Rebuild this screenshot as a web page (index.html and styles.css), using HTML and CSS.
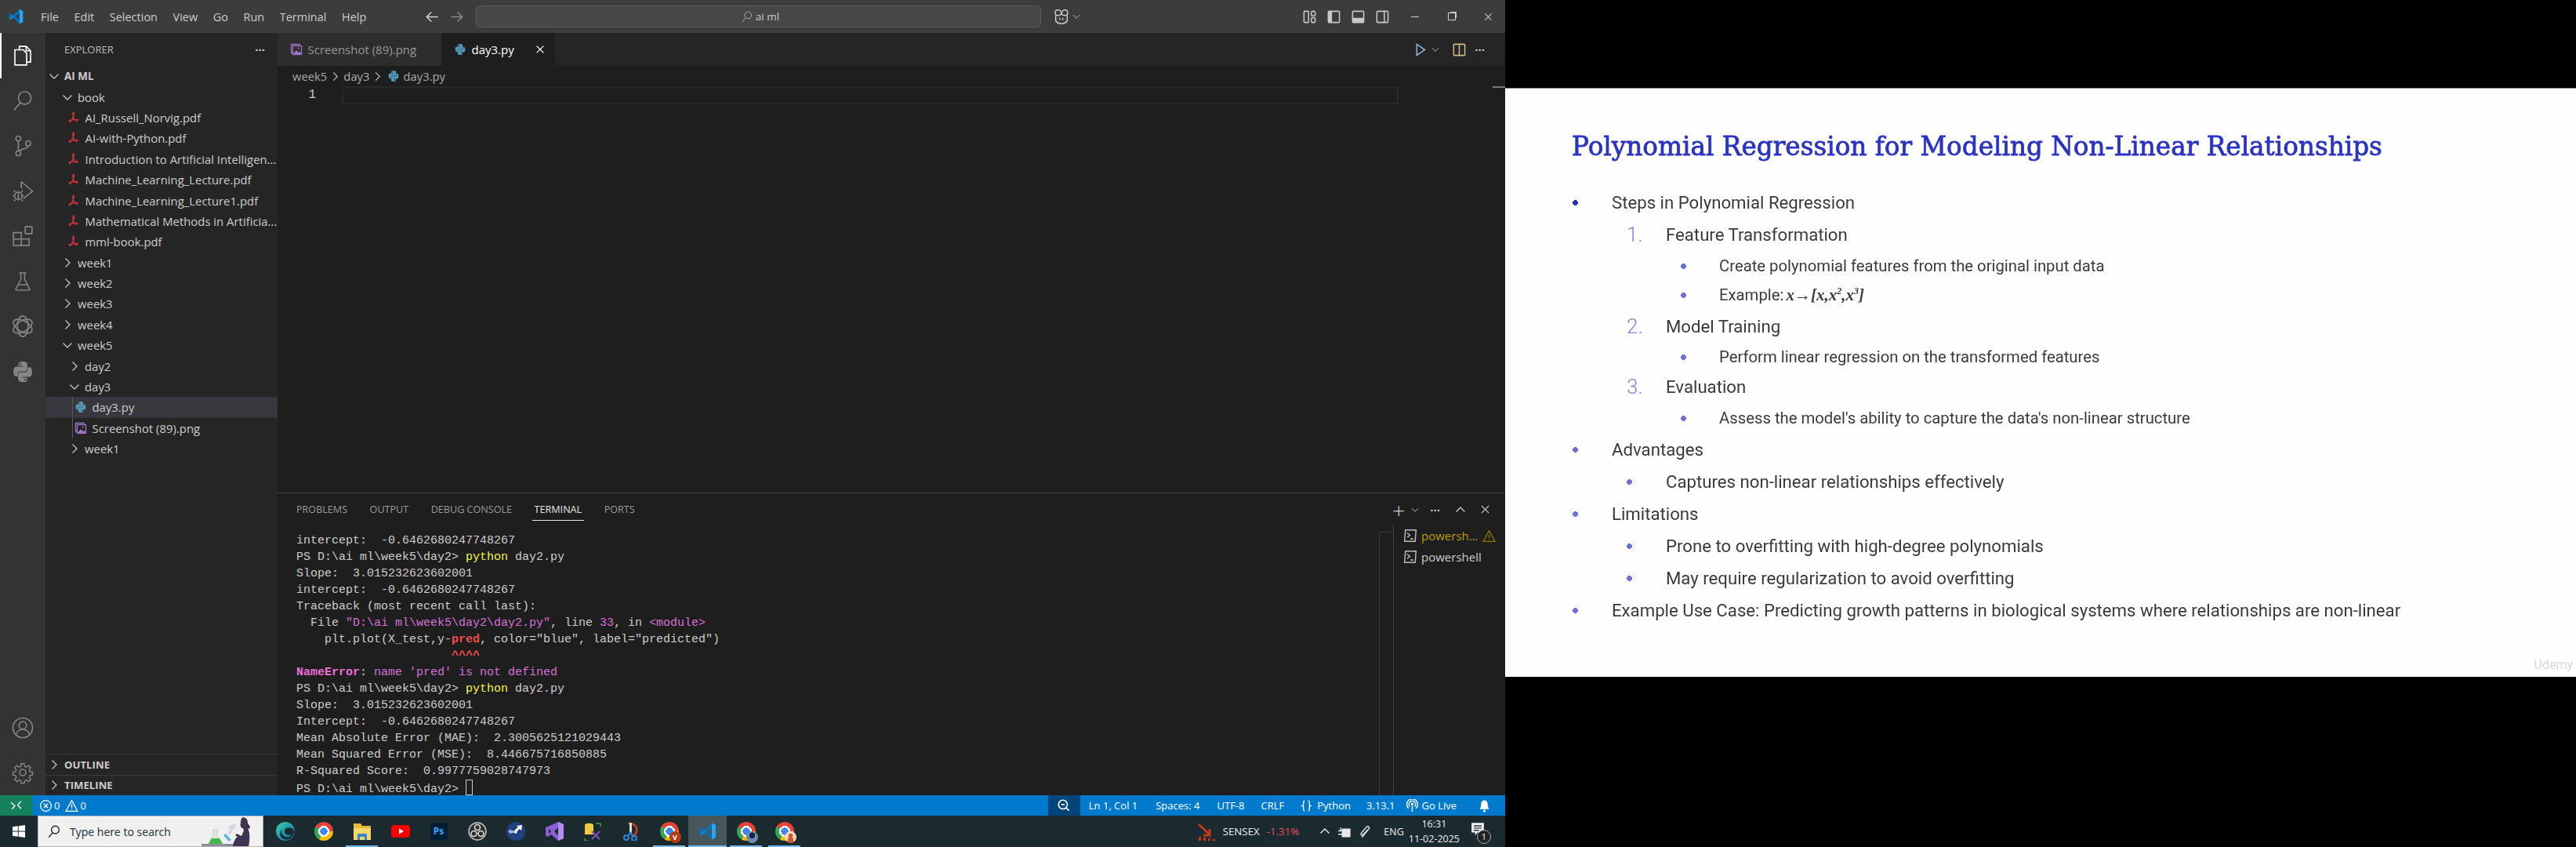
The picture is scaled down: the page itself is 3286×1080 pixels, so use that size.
FILE: index.html
```html
<!DOCTYPE html>
<html lang="en">
<head>
<meta charset="utf-8">
<title>day3.py - AI ML</title>
<link rel="stylesheet" href="styles.css">
</head>
<body>
<svg class="sprite" xmlns="http://www.w3.org/2000/svg">
  <symbol id="vsc" viewBox="0 0 24 24"><path fill="#0b6fb8" d="M17 1.5 7.6 10.3 3.4 7.1 1.7 8v8l1.7.9 4.2-3.2 9.4 8.8 5-2.4V3.9zM17 7.4v9.2L10.9 12z"/><path fill="#2aa5ee" d="M17 1.5l5 2.4v16.2l-5 2.4V16.6l0-9.2z"/><path fill="#1487d4" d="M1.7 16l3-3 3-2.7 2 1.7-6.3 4.9z"/></symbol>
  <symbol id="chev-r" viewBox="0 0 16 16"><path d="M5.5 2.5 11 8l-5.500 5.500"/></symbol>
  <symbol id="chev-d" viewBox="0 0 16 16"><path d="M2.500 5.500 8 11l5.500-5.500"/></symbol>
  <symbol id="files" viewBox="0 0 24 24"><path d="M8.500 6V2.500h7l4.500 4.500v11.500h-4"/><path d="M15.500 2.500V7h4.500"/><path d="M4 6h8.500L16 9.500v12H4z"/></symbol>
  <symbol id="search" viewBox="0 0 24 24"><circle cx="14" cy="9.500" r="6.500"/><path d="M9.500 14.500 3 22"/></symbol>
  <symbol id="scm" viewBox="0 0 24 24"><circle cx="7.500" cy="4.500" r="2.500"/><circle cx="7.500" cy="19.500" r="2.500"/><circle cx="17.500" cy="9.500" r="2.500"/><path d="M7.500 7v10M17.500 12c0 3.500-7 2.500-9 5"/></symbol>
  <symbol id="debug" viewBox="0 0 24 24"><path d="M10.500 2 22 12l-9.500 7.500M10.500 2v7"/><circle cx="7.500" cy="16.500" r="3.800"/><path d="M3.700 16.500H2M13 16.500h-2M4.300 12.500 3 11M10.700 12.500 12 11M4.300 20.500 3 22M10.700 20.500 12 22M7.500 12.700v7.600"/></symbol>
  <symbol id="ext" viewBox="0 0 24 24"><path d="M2.500 8.500h8v13h-8zM2.500 15h16v6.500h-8"/><rect x="14.500" y="2.500" width="7" height="7" rx=".5"/><path d="M10.500 8.500h1M18.500 14v1"/></symbol>
  <symbol id="flask" viewBox="0 0 24 24"><path d="M8 2.500h8M10 2.500v7L4.500 20c-.5 1 0 1.500 1 1.500h13c1 0 1.500-.5 1-1.500L14 9.500v-7M7.500 15.500h9"/></symbol>
  <symbol id="openai" viewBox="0 0 24 24"><ellipse cx="12" cy="12" rx="5.500" ry="10.500"/><ellipse cx="12" cy="12" rx="5.500" ry="10.500" transform="rotate(60 12 12)"/><ellipse cx="12" cy="12" rx="5.500" ry="10.500" transform="rotate(120 12 12)"/></symbol>
  <symbol id="python" viewBox="0 0 24 24"><path class="solid" d="M11.900 1.500c-4.600 0-4.300 2-4.300 2v2.500h4.500v.8H5.500S2.500 6.500 2.500 11.700s2.700 5 2.700 5h1.700v-2.400s-.1-2.700 2.700-2.700h4.500s2.600 0 2.600-2.500V4.400s.4-2.900-4.800-2.900zM9.400 3a.9.9 0 1 1 0 1.800.9.9 0 0 1 0-1.800z"/><path class="solid" transform="rotate(180 12 12)" d="M11.900 1.500c-4.600 0-4.300 2-4.300 2v2.500h4.500v.8H5.500S2.500 6.500 2.500 11.700s2.700 5 2.700 5h1.700v-2.400s-.1-2.700 2.700-2.700h4.500s2.600 0 2.600-2.500V4.400s.4-2.900-4.800-2.900zM9.400 3a.9.9 0 1 1 0 1.800.9.9 0 0 1 0-1.800z"/></symbol>
  <symbol id="account" viewBox="0 0 24 24"><circle cx="12" cy="12" r="10"/><circle cx="12" cy="9.500" r="3.800"/><path d="M5 19c1-3.500 4-5.500 7-5.500s6 2 7 5.500"/></symbol>
  <symbol id="gear" viewBox="0 0 24 24"><circle cx="12" cy="12" r="3.200"/><path d="M10.300 2h3.400l.5 3 2 .9 2.500-1.800 2.400 2.400-1.800 2.500.8 2 3 .5v3.400l-3 .5-.8 2 1.800 2.500-2.400 2.400-2.500-1.800-2 .8-.5 3h-3.400l-.5-3-2-.8-2.500 1.800-2.400-2.400 1.800-2.500-.8-2-3-.5v-3.400l3-.5.8-2-1.800-2.500 2.400-2.400 2.500 1.800 2-.9z" transform="translate(1.200 1.200) scale(.9)"/></symbol>
  <symbol id="pdf" viewBox="0 0 16 16"><path d="M1.500 12.500c3-1.800 6-2.800 12.500-1.700M7.700 1C6.700 1 7 5 7 5c.3 2.500 2 5.500 5.500 8M7.700 1C9 1 8.500 4 7 7.500 5.500 11 4 14 2.500 14"/></symbol>
  <symbol id="png" viewBox="0 0 16 16"><path d="M3 12.500h-1.500V1.500H12V3"/><rect x="3.500" y="3.500" width="11" height="11"/><circle cx="10.800" cy="6.500" r="1.100" class="solid"/><path class="solid" d="M4 14l4-5 3 3 1.500-1.200 2 3.200z"/></symbol>
  <symbol id="close" viewBox="0 0 16 16"><path d="M3 3l10 10M13 3 3 13"/></symbol>
  <symbol id="run" viewBox="0 0 16 16"><path d="M4.500 2 13 8l-8.500 6z"/></symbol>
  <symbol id="split" viewBox="0 0 16 16"><rect x="2" y="2" width="12" height="12" rx="1"/><path d="M8 2v12"/></symbol>
  <symbol id="back" viewBox="0 0 16 16"><path d="M14 8H2.500M7 3 2 8l5 5"/></symbol>
  <symbol id="fwd" viewBox="0 0 16 16"><path d="M2 8h11.500M9 3l5 5-5 5"/></symbol>
  <symbol id="copilot" viewBox="0 0 24 24"><path d="M12 7c-1-3-3.500-4.500-6-4-2.500.5-3 3-2.500 5 .5 2 3 3 5 2.500 2-.4 3.500-1.500 3.500-3.500zM12 7c1-3 3.500-4.500 6-4 2.500.5 3 3 2.500 5-.5 2-3 3-5 2.500-2-.4-3.500-1.500-3.500-3.500z"/><path d="M4 10v8c2 3 5 4 8 4s6-1 8-4v-8"/><path d="M10 14v3M14 14v3"/></symbol>
  <symbol id="lay-custom" viewBox="0 0 16 16"><rect x="2" y="2" width="5" height="12" rx="1"/><rect x="10" y="2" width="4" height="5" rx="1"/><rect x="10" y="9" width="4" height="5" rx="1"/></symbol>
  <symbol id="lay-side" viewBox="0 0 16 16"><rect x="2" y="2" width="12" height="12" rx="1"/><path class="solid" d="M2 3a1 1 0 0 1 1-1h3v12H3a1 1 0 0 1-1-1z"/></symbol>
  <symbol id="lay-panel" viewBox="0 0 16 16"><rect x="2" y="2" width="12" height="12" rx="1"/><path class="solid" d="M2 9h12v4a1 1 0 0 1-1 1H3a1 1 0 0 1-1-1z"/></symbol>
  <symbol id="lay-right" viewBox="0 0 16 16"><rect x="2" y="2" width="12" height="12" rx="1"/><path d="M10 2v12"/></symbol>
  <symbol id="terminal" viewBox="0 0 16 16"><path d="M2.500 1.500h12l-1 13h-12z"/><path d="M4.500 5l3 2.500-3 2.500M8 11.500h3.500"/></symbol>
  <symbol id="warn" viewBox="0 0 16 16"><path d="M8 1.500 15 14.500H1zM8 6v4.500M8 11.700v1"/></symbol>
  <symbol id="remote" viewBox="0 0 16 16"><path d="M2 4l4.500 4L3 12M14 2.500 10 7l4 4.500"/></symbol>
  <symbol id="err" viewBox="0 0 16 16"><circle cx="8" cy="8" r="6.500"/><path d="M5.500 5.500l5 5M10.500 5.500l-5 5"/></symbol>
  <symbol id="zoomout" viewBox="0 0 16 16"><circle cx="7" cy="7" r="5"/><path d="M10.500 10.500 14 14M5 7h4"/></symbol>
  <symbol id="braces" viewBox="0 0 16 16"><path d="M6 2C4 2 4.500 4 4.500 6 4.500 7.500 3 8 3 8s1.500.5 1.500 2c0 2-.5 4 1.500 4M10 2c2 0 1.500 2 1.500 4 0 1.500 1.500 2 1.500 2s-1.500.5-1.500 2c0 2 .5 4-1.500 4"/></symbol>
  <symbol id="golive" viewBox="0 0 16 16"><circle cx="8" cy="6" r="1.600" class="solid"/><path d="M8 8v7M5 9a4 4 0 1 1 6 0M3.500 11a6.500 6.500 0 1 1 9 0"/></symbol>
  <symbol id="bell" viewBox="0 0 16 16"><path class="solid" d="M8 1.500c-3 0-4 2.500-4 5 0 3-1.500 4.500-1.500 5.500h11c0-1-1.500-2.500-1.500-5.500 0-2.500-1-5-4-5z"/><circle cx="8" cy="14" r="1.500" class="solid"/></symbol>
  <symbol id="win" viewBox="0 0 16 16"><path class="solid" d="M0 2.300 6.800 1.300v6.200H0zM7.700 1.200 16 0v7.500H7.700zM0 8.400h6.800v6.300L0 13.700zM7.700 8.400H16V16l-8.300-1.200z"/></symbol>
</svg>

<div class="screen">
  <div class="vscode">
    <header class="titlebar">
      <svg class="tb-logo"><use href="#vsc"/></svg>
      <nav class="menu">
        <span>File</span><span>Edit</span><span>Selection</span><span>View</span><span>Go</span><span>Run</span><span>Terminal</span><span>Help</span>
      </nav>
      <svg class="ico nav-back"><use href="#back"/></svg>
      <svg class="ico nav-fwd"><use href="#fwd"/></svg>
      <div class="cmd"><svg class="ico-s"><use href="#search"/></svg><span>ai ml</span></div>
      <svg class="copilot"><use href="#copilot"/></svg>
      <svg class="ico-xs chev-after"><use href="#chev-d"/></svg>
      <div class="layout-btns">
        <svg class="ico"><use href="#lay-custom"/></svg>
        <svg class="ico"><use href="#lay-side"/></svg>
        <svg class="ico"><use href="#lay-panel"/></svg>
        <svg class="ico"><use href="#lay-right"/></svg>
      </div>
      <div class="win-btns">
        <span class="min"></span>
        <span class="restore"></span>
        <svg class="ico-x"><use href="#close"/></svg>
      </div>
    </header>

    <div class="workbench">
      <aside class="activity">
        <div class="act act-on"><svg><use href="#files"/></svg></div>
        <div class="act"><svg><use href="#search"/></svg></div>
        <div class="act"><svg><use href="#scm"/></svg></div>
        <div class="act"><svg><use href="#debug"/></svg></div>
        <div class="act"><svg><use href="#ext"/></svg></div>
        <div class="act act-flask"><svg><use href="#flask"/></svg></div>
        <div class="act"><svg><use href="#openai"/></svg></div>
        <div class="act"><svg class="gray-fill"><use href="#python"/></svg></div>
        <div class="act act-account"><svg><use href="#account"/></svg></div>
        <div class="act"><svg><use href="#gear"/></svg></div>
      </aside>

      <aside class="sidebar">
        <div class="side-head"><span>EXPLORER</span><b class="dots">···</b></div>
        <div class="tree">
          <div class="row d0 strong"><svg class="chev"><use href="#chev-d"/></svg><span>AI ML</span></div>
          <div class="row d1"><svg class="chev"><use href="#chev-d"/></svg><span>book</span></div>
          <div class="row f1"><svg class="ficon pdf"><use href="#pdf"/></svg><span>AI_Russell_Norvig.pdf</span></div>
          <div class="row f1"><svg class="ficon pdf"><use href="#pdf"/></svg><span>AI-with-Python.pdf</span></div>
          <div class="row f1"><svg class="ficon pdf"><use href="#pdf"/></svg><span>Introduction to Artificial Intelligen...</span></div>
          <div class="row f1"><svg class="ficon pdf"><use href="#pdf"/></svg><span>Machine_Learning_Lecture.pdf</span></div>
          <div class="row f1"><svg class="ficon pdf"><use href="#pdf"/></svg><span>Machine_Learning_Lecture1.pdf</span></div>
          <div class="row f1"><svg class="ficon pdf"><use href="#pdf"/></svg><span>Mathematical Methods in Artificia...</span></div>
          <div class="row f1"><svg class="ficon pdf"><use href="#pdf"/></svg><span>mml-book.pdf</span></div>
          <div class="row d1"><svg class="chev"><use href="#chev-r"/></svg><span>week1</span></div>
          <div class="row d1"><svg class="chev"><use href="#chev-r"/></svg><span>week2</span></div>
          <div class="row d1"><svg class="chev"><use href="#chev-r"/></svg><span>week3</span></div>
          <div class="row d1"><svg class="chev"><use href="#chev-r"/></svg><span>week4</span></div>
          <div class="row d1"><svg class="chev"><use href="#chev-d"/></svg><span>week5</span></div>
          <div class="row d2"><svg class="chev"><use href="#chev-r"/></svg><span>day2</span></div>
          <div class="row d2"><svg class="chev"><use href="#chev-d"/></svg><span>day3</span></div>
          <div class="row f2 guide selected"><svg class="ficon py"><use href="#python"/></svg><span>day3.py</span></div>
          <div class="row f2 guide"><svg class="ficon img"><use href="#png"/></svg><span>Screenshot (89).png</span></div>
          <div class="row d2"><svg class="chev"><use href="#chev-r"/></svg><span>week1</span></div>
        </div>
        <div class="section"><svg class="chev"><use href="#chev-r"/></svg><span>OUTLINE</span></div>
        <div class="section"><svg class="chev"><use href="#chev-r"/></svg><span>TIMELINE</span></div>
      </aside>

      <main class="main">
        <div class="tabs">
          <div class="tab tab-idle"><svg class="ficon img"><use href="#png"/></svg><span>Screenshot (89).png</span></div>
          <div class="tab tab-active"><svg class="ficon py"><use href="#python"/></svg><span>day3.py</span><svg class="tab-x"><use href="#close"/></svg></div>
          <div class="tab-actions">
            <svg class="ico run"><use href="#run"/></svg>
            <svg class="ico-xs"><use href="#chev-d"/></svg>
            <svg class="ico split"><use href="#split"/></svg>
            <b class="dots">···</b>
          </div>
        </div>
        <div class="crumbs">
          <span>week5</span><svg class="ico-xs2"><use href="#chev-r"/></svg>
          <span>day3</span><svg class="ico-xs2"><use href="#chev-r"/></svg>
          <svg class="ficon py crumb-py"><use href="#python"/></svg><span>day3.py</span>
        </div>
        <div class="editor">
          <div class="line">
            <span class="ln">1</span>
            <div class="curline"></div>
            <span class="scrollmark"></span>
          </div>
        </div>

        <section class="panel">
          <div class="panel-head">
            <div class="ptabs">
              <span>PROBLEMS</span><span>OUTPUT</span><span>DEBUG CONSOLE</span><span class="ptab-on">TERMINAL</span><span>PORTS</span>
            </div>
            <div class="pactions">
              <span class="plus">+</span>
              <svg class="ico-xs"><use href="#chev-d"/></svg>
              <b class="dots">···</b>
              <svg class="ico-up"><use href="#chev-d"/></svg>
              <svg class="ico-x2"><use href="#close"/></svg>
            </div>
          </div>
          <div class="panel-body">
            <div class="term">
              <div>intercept:  -0.6462680247748267</div>
              <div>PS D:\ai ml\week5\day2&gt; <span class="yel">python</span> day2.py</div>
              <div>Slope:  3.015232623602001</div>
              <div>intercept:  -0.6462680247748267</div>
              <div>Traceback (most recent call last):</div>
              <div>  File <span class="mag">"D:\ai ml\week5\day2\day2.py"</span>, line <span class="mag">33</span>, in <span class="mag">&lt;module&gt;</span></div>
              <div>    plt.plot(X_test,y-<span class="redb">pred</span>, color="blue", label="predicted")</div>
              <div>                      <span class="redb">^^^^</span></div>
              <div><span class="magb">NameError</span>: <span class="mag">name 'pred' is not defined</span></div>
              <div>PS D:\ai ml\week5\day2&gt; <span class="yel">python</span> day2.py</div>
              <div>Slope:  3.015232623602001</div>
              <div>Intercept:  -0.6462680247748267</div>
              <div>Mean Absolute Error (MAE):  2.3005625121029443</div>
              <div>Mean Squared Error (MSE):  8.446675716850885</div>
              <div>R-Squared Score:  0.9977759028747973</div>
              <div>PS D:\ai ml\week5\day2&gt; <span class="cursor"></span></div>
            </div>
            <div class="term-gutter"></div>
            <div class="term-list">
              <div class="term-item warn-item"><svg class="tico"><use href="#terminal"/></svg><span>powersh...</span><svg class="twarn"><use href="#warn"/></svg></div>
              <div class="term-item"><svg class="tico"><use href="#terminal"/></svg><span>powershell</span></div>
            </div>
          </div>
        </section>
      </main>
    </div>

    <footer class="statusbar">
      <div class="st-remote"><svg><use href="#remote"/></svg></div>
      <div class="st-errs"><svg><use href="#err"/></svg><span>0</span><svg><use href="#warn"/></svg><span>0</span></div>
      <div class="st-right">
        <div class="st-zoom"><svg><use href="#zoomout"/></svg></div>
        <span class="st-ln">Ln 1, Col 1</span>
        <span class="st-sp">Spaces: 4</span>
        <span class="st-utf">UTF-8</span>
        <span>CRLF</span>
        <span class="st-lang"><svg><use href="#braces"/></svg>Python</span>
        <span>3.13.1</span>
        <span class="st-live"><svg><use href="#golive"/></svg>Go Live</span>
        <svg class="st-bell"><use href="#bell"/></svg>
      </div>
    </footer>

    <div class="taskbar">
      <div class="start"><svg><use href="#win"/></svg></div>
      <div class="tsearch">
        <svg class="tsearch-ico"><use href="#search"/></svg>
        <span>Type here to search</span>
        <svg class="tsearch-art" viewBox="0 0 74 40">
          <path fill="#8d8a9c" d="M0 36h50v4H0z"/>
          <path fill="#dfe9dd" stroke="#9fb5a5" d="M15 18h5v7l7 11H9l6-11z"/>
          <path fill="#43b649" d="M13 29h10l4 7H9z"/>
          <path fill="#58b7e8" d="M28 25l3-2 7 8-3 2z"/>
          <path fill="#d7d4e2" d="M34 14l8-4 3 3-6 6-2 5-3-1 2-5z"/>
          <path fill="#3e3553" d="M52 2c5 0 7 3 7 7 0 2 3 3 3 6 0 2-3 2-3 1 3 5 3 15 1 24H40c1-6 2-10 6-13l-3-2 2-2 6 3 3-7-1-3c-3 0-4-3-3-7 0-4 1-7 4-7z"/>
        </svg>
      </div>
      <div class="apps">
        <div class="app"><svg viewBox="0 0 24 24"><defs><linearGradient id="edge" x1="0" y1="0" x2="1" y2="1"><stop offset="0" stop-color="#39d2a0"/><stop offset="1" stop-color="#0c63b8"/></linearGradient></defs><circle cx="12" cy="12" r="12" fill="url(#edge)"/><path fill="#1a2a2e" d="M24 12c-2-4-7-6-11-4-3 2-3 6 0 8 2 1 5 1 7 0-2 3-5 4-7 3-5-1-7-6-5-10-3 3-3 7-2 10 5 6 15 5 18-7z"/></svg></div>
        <div class="app"><span class="chrome"></span></div>
        <div class="app running"><svg viewBox="0 0 24 24"><path fill="#e9ba3c" d="M1 2h9l2 3h11v18H1z"/><path fill="#f6d76b" d="M1 8h22v15H1z"/><path fill="#3a86c8" d="M6 15h12v8h-3v-4H9v4H6z"/></svg></div>
        <div class="app"><svg viewBox="0 0 24 24"><rect y="4" width="24" height="16" rx="4" fill="#f00"/><path fill="#fff" d="M10 8.500 16 12l-6 3.500z"/></svg></div>
        <div class="app"><span class="ps">Ps</span></div>
        <div class="app"><svg viewBox="0 0 24 24"><circle cx="12" cy="12" r="11" fill="#302e31" stroke="#c9c9c9" stroke-width="1.400"/><circle cx="12" cy="7" r="3.500" fill="none" stroke="#ddd" stroke-width="1.600"/><circle cx="7.500" cy="15" r="3.500" fill="none" stroke="#ddd" stroke-width="1.600"/><circle cx="16.500" cy="15" r="3.500" fill="none" stroke="#ddd" stroke-width="1.600"/></svg></div>
        <div class="app"><svg viewBox="0 0 24 24"><circle cx="12" cy="12" r="12" fill="#21407f"/><path fill="#fff" d="M9 14c1-4 4-6 6-7l-2-2 7-1-1 7-2-2c-2 1-4 3-4 6z"/><path fill="#9bb7dc" d="M2 12l4-3v2h5v3H6v2z"/></svg></div>
        <div class="app"><svg viewBox="0 0 24 24"><path fill="#8a5fd0" d="M1 7l5-2 11-5 7 3v18l-7 3-9-8-4 3-3-1.500zM5 9v6l3-3zM17 7l-5 5 5 5z"/><path fill="#b48bf0" d="M17 0l7 3v18l-7 3z"/></svg></div>
        <div class="app"><svg viewBox="0 0 24 24"><path fill="none" stroke="#3f9b46" stroke-width="1.500" d="M2 21v3h4M22 6V2h-6"/><path fill="#f0c93d" d="M2 4c0-3 11-3 11 0v12H2z"/><path fill="none" stroke="#7a58b8" stroke-width="2" d="M11 22l10-10M11 12l10 10"/></svg></div>
        <div class="app"><svg viewBox="0 0 24 24"><path fill="none" stroke="#c8431d" stroke-width="2.500" d="M8 2c6-1 13 3 11 11-1 3-3 4-5 5"/><path fill="#ddd" d="M10 1h3v13h-3z"/><circle cx="6" cy="20" r="3" fill="none" stroke="#2d87d6" stroke-width="2"/><circle cx="16" cy="21" r="3" fill="none" stroke="#2d87d6" stroke-width="2"/><path stroke="#2d87d6" stroke-width="2" d="M8 18l4-5M14 18l-3-5"/></svg></div>
        <div class="app running"><span class="chrome"><em class="badge badge-v">V</em></span></div>
        <div class="app active"><svg><use href="#vsc"/></svg></div>
        <div class="app running"><span class="chrome"><em class="badge badge-photo"></em></span></div>
        <div class="app running"><span class="chrome"><em class="badge badge-user"></em></span></div>
      </div>
      <div class="tray">
        <svg class="sensex" viewBox="0 0 24 24"><path fill="none" stroke="#c8361a" stroke-width="3" d="M2 3l14 13M16 9v8H8"/><path fill="#c8361a" d="M2 19h3v5H2zM8 20h3v4H8zM14 21h3v3h-3zM20 22h3v2h-3z"/></svg>
        <span class="sx-name">SENSEX</span>
        <span class="sx-val">-1.31%</span>
        <svg class="tray-up"><use href="#chev-d"/></svg>
        <svg class="tray-ico" viewBox="0 0 16 16"><path fill="#e8e8e8" d="M6 5h9v9H6z"/><path fill="none" stroke="#e8e8e8" d="M1 7h5M1 11h5M4 3v4"/></svg>
        <svg class="tray-ico" viewBox="0 0 16 16"><path fill="none" stroke="#e8e8e8" d="M3 15l9-11a2 2 0 0 0-3-2L3 9c-2 2-1 4 1 3l7-7"/></svg>
        <span class="eng">ENG</span>
        <div class="clock"><span>16:31</span><span>11-02-2025</span></div>
        <div class="notif"><svg viewBox="0 0 16 16"><path fill="#f0f0f0" d="M1 1h14v11H8l-3 3v-3H1z"/><path stroke="#333" d="M3.500 4.500h9M3.500 7h9M3.500 9.500h6"/></svg><em>1</em></div>
      </div>
    </div>
  </div>

  <div class="viewer">
    <section class="slide">
      <h1>Polynomial Regression for Modeling Non-Linear Relationships</h1>
      <ul class="points">
        <li class="l1"><i class="dot dot-strong"></i>Steps in Polynomial Regression</li>
        <li class="l2 m1"><i class="num">1.</i>Feature Transformation</li>
        <li class="l3"><i class="dot"></i>Create polynomial features from the original input data</li>
        <li class="l3 n3"><i class="dot"></i>Example:<span class="math">x→[x,x<sup>2</sup>,x<sup>3</sup>]</span></li>
        <li class="l2"><i class="num">2.</i>Model Training</li>
        <li class="l3 n1"><i class="dot"></i>Perform linear regression on the transformed features</li>
        <li class="l2 n2"><i class="num">3.</i>Evaluation</li>
        <li class="l3"><i class="dot"></i>Assess the model's ability to capture the data's non-linear structure</li>
        <li class="l1"><i class="dot"></i>Advantages</li>
        <li class="l2 m1"><i class="dot"></i>Captures non-linear relationships effectively</li>
        <li class="l1 m1"><i class="dot"></i>Limitations</li>
        <li class="l2 m1"><i class="dot"></i>Prone to overfitting with high-degree polynomials</li>
        <li class="l2 m1"><i class="dot"></i>May require regularization to avoid overfitting</li>
        <li class="l1 m1"><i class="dot"></i>Example Use Case: Predicting growth patterns in biological systems where relationships are non-linear</li>
      </ul>
      <span class="watermark">Udemy</span>
    </section>
  </div>
</div>
</body>
</html>
```

FILE: styles.css
```css
* { box-sizing: border-box; }
html, body { margin: 0; padding: 0; background: #000; overflow: hidden; }
body { font-family: "Open Sans", "Noto Sans", sans-serif; color: #ccc; }
.sprite { display: none; }
svg { fill: none; stroke: currentColor; stroke-width: 1.3; flex: none; display: block; }
svg .solid, .solid { fill: currentColor; stroke: none; }
.screen { display: grid; grid-template-columns: 1920px 1366px; width: 3286px; height: 1080px; }
.vscode { display: flex; flex-direction: column; height: 1080px; overflow: hidden; }

/* title bar */
.titlebar { height: 42px; background: #3c3c3c; display: flex; align-items: center; padding-left: 10px; font-size: 14.500px; color: #ccc; flex: none; }
.tb-logo { width: 21px; height: 24px; stroke: none; }
.menu { display: flex; gap: 19.500px; margin-left: 21px; width: 450px; }
.ico { width: 19px; height: 19px; }
.ico-s { width: 16px; height: 16px; color: #bbb; margin-right: 3px; }
.ico-xs { width: 12px; height: 12px; color: #bbb; }
.ico-xs2 { width: 15px; height: 17px; color: #bbb; }
.ico-x { width: 13px; height: 13px; }
.nav-back { margin-left: 39.500px; color: #d0d0d0; }
.nav-fwd { margin-left: 12px; color: #8a8a8a; }
.cmd { width: 721px; height: 28px; margin-left: 15px; background: #474747; border: 1px solid #5c5c5c; border-radius: 6px; display: flex; justify-content: center; align-items: center; font-size: 13.500px; padding-left: 5px; }
.copilot { width: 22px; height: 22px; margin-left: 15px; color: #d4d4d4; stroke-width: 1.500; }
.chev-after { margin-left: 2px; }
.layout-btns { margin-left: 282.500px; display: flex; gap: 12px; color: #c8c8c8; }
.win-btns { display: flex; align-items: center; margin-left: 26.500px; gap: 35px; color: #ccc; }
.min { width: 10px; height: 1px; background: #ccc; }
.restore { width: 10px; height: 10px; margin-left: 2px; border: 1px solid #ccc; box-shadow: 2px -2px 0 -1px #ccc; }

/* workbench */
.workbench { flex: 1; display: flex; min-height: 0; }
.activity { width: 58px; background: #333; display: flex; flex-direction: column; align-items: stretch; flex: none; color: #858585; }
.act { height: 57.600px; display: flex; align-items: center; justify-content: center; flex: none; }
.act svg { width: 30px; height: 30px; }
.act-on { color: #fff; border-left: 2px solid #fff; padding-right: 2px; }
.act-flask svg { width: 28px; height: 28px; }
.gray-fill { color: #858585; }
.act-account { margin-top: auto; }

.sidebar { width: 296px; background: #252526; display: flex; flex-direction: column; flex: none; font-size: 14.900px; }
.side-head { height: 42px; padding: 0 16px 0 24px; display: flex; align-items: center; justify-content: space-between; font-size: 13px; color: #bbb; flex: none; }
.dots { font-weight: 700; letter-spacing: 0; font-size: 15px; color: #ccc; }
.tree { flex: 1; min-height: 0; }
.row { height: 26.400px; display: flex; align-items: center; white-space: nowrap; color: #ccc; position: relative; }
.chev { width: 16px; height: 16px; color: #c5c5c5; margin-right: 5px; }
.row.strong { font-weight: 700; font-size: 13.500px; }
.d0 { padding-left: 3px; }
.d1 { padding-left: 20px; }
.d2 { padding-left: 29px; }
.f1 { padding-left: 28px; }
.f2 { padding-left: 37px; }
.ficon { width: 16px; height: 16px; margin-right: 6.500px; }
.pdf { color: #c8323a; stroke-width: 1.500; }
.py { color: #519aba; }
.img { color: #a074c4; }
.selected { background: #37373d; }
.guide::before { content: ""; position: absolute; left: 34px; top: 0; bottom: 0; width: 1px; background: #585858; }
.section { height: 26.400px; flex: none; border-top: 1px solid #3c3c3c; display: flex; align-items: center; padding-left: 3px; font-weight: 700; font-size: 13.200px; color: #ccc; }
.section .chev { margin-right: 5px; }

/* main */
.main { flex: 1; min-width: 0; display: flex; flex-direction: column; background: #1e1e1e; }
.tabs { height: 42px; background: #252526; display: flex; flex: none; align-items: stretch; font-size: 15px; }
.tab { display: flex; align-items: center; }
.tab-idle { width: 209px; background: #2d2d2d; padding-left: 16px; color: #969696; }
.tab-active { width: 145px; background: #1e1e1e; padding-left: 16px; color: #fff; position: relative; }
.tab-x { width: 14px; height: 14px; color: #fff; margin-left: auto; margin-right: 12px; stroke-width: 1.600; }
.tab-actions { margin-left: auto; display: flex; align-items: center; padding-right: 26px; }
.run { color: #89b7d4; margin-right: 4px; }
.split { color: #d0b88c; margin-left: 15px; margin-right: 10px; }
.crumbs { height: 26px; display: flex; align-items: center; padding-left: 19px; gap: 3px; font-size: 14.800px; color: #a9a9a9; flex: none; }
.crumb-py { margin-left: 2px; margin-right: 1px; }
.editor { flex: 1; min-height: 0; }
.line { height: 23px; display: flex; font-family: "Liberation Mono", monospace; font-size: 16px; }
.ln { width: 82px; text-align: right; padding-right: 33px; color: #c6c6c6; line-height: 23px; flex: none; }
.curline { width: 1348px; border: 2px solid #282828; }
.scrollmark { width: 16px; height: 2px; background: #7a7a7a; margin-left: 120px; }

.panel { height: 386px; flex: none; border-top: 1px solid #414141; display: flex; flex-direction: column; }
.panel-head { height: 41px; display: flex; align-items: center; justify-content: space-between; flex: none; padding: 0 18px 0 21px; }
.ptabs { display: flex; align-items: center; font-size: 12.600px; color: #9a9a9a; gap: 22.500px; }
.ptabs span { height: 28px; line-height: 28px; padding: 0 3px; border-bottom: 1px solid transparent; }
.ptab-on { color: #e7e7e7; border-bottom-color: #e7e7e7 !important; }
.pactions { display: flex; align-items: center; color: #ccc; gap: 13px; }
.plus { font-size: 28px; line-height: 20px; font-weight: 300; color: #ccc; margin-right: -6px; }
.ico-up { width: 16px; height: 16px; transform: scaleY(-1); margin-left: 5px; }
.ico-x2 { width: 15px; height: 15px; margin-left: 3px; }
.panel-body { flex: 1; min-height: 0; display: flex; }
.term { margin: 9px 0 0; width: 1405px; height: 336px; padding-left: 24px; font-family: "Liberation Mono", monospace; font-size: 15px; line-height: 21px; color: #ccc; overflow: hidden; }
.term div { white-space: pre; height: 21px; }
.yel { color: #f5f543; }
.mag { color: #d670d6; }
.redb { color: #f14c4c; font-weight: 700; }
.magb { color: #ed6ed6; font-weight: 700; }
.cursor { display: inline-block; width: 9px; height: 20px; border: 1px solid #ccc; vertical-align: -4px; }
.term-gutter { width: 18px; height: 336px; margin-top: 8px; border-left: 1px solid #3a3a3a; border-top: 1px solid #3a3a3a; flex: none; }
.term-list { flex: 1; border-left: 1px solid #414141; font-size: 15px; }
.term-item { height: 26.400px; display: flex; align-items: center; padding-left: 12px; color: #ccc; white-space: nowrap; }
.warn-item { color: #c09c00; }
.tico { width: 18px; height: 18px; color: #bbb; margin-right: 5px; }
.twarn { width: 17px; height: 17px; color: #8f7500; margin-left: auto; margin-right: 12px; }

/* status bar */
.statusbar { height: 26px; flex: none; background: #007acc; color: #fff; display: flex; align-items: center; font-size: 13px; }
.st-remote { width: 41px; height: 26px; background: #16825d; display: flex; align-items: center; justify-content: center; }
.st-remote svg { width: 17px; height: 17px; }
.st-errs { display: flex; align-items: center; gap: 2px; margin-left: 9px; }
.st-errs svg { width: 17px; height: 17px; }
.st-errs span + svg { margin-left: 5px; }
.st-right { margin-left: auto; display: flex; align-items: center; height: 26px; gap: 20px; }
.st-zoom { width: 41px; height: 26px; background: #00467a; display: flex; align-items: center; justify-content: center; margin-right: -9px; }
.st-zoom svg { width: 18px; height: 18px; stroke-width: 1.500; }
.st-ln { margin-right: 3px; }
.st-sp { margin-right: 2px; }
.st-utf { margin-right: 1px; }
.st-lang, .st-live { display: flex; align-items: center; gap: 5px; }
.st-live { gap: 3px; margin-left: -6px; }
.st-lang svg, .st-live svg { width: 17px; height: 17px; }
.st-bell { width: 17px; height: 17px; margin: 0 18px 0 7px; }

/* taskbar */
.taskbar { height: 40px; flex: none; background: #1b2a2f; display: flex; align-items: stretch; color: #fff; position: relative; }
.start { width: 48px; display: flex; align-items: center; justify-content: center; }
.start svg { width: 16px; height: 16px; color: #fff; }
.tsearch { width: 288px; background: #f0f0f0; border: 1px solid #b8b8b8; display: flex; align-items: center; padding-left: 11px; font-size: 14px; font-family: "Noto Sans", sans-serif; color: #2c3a48; overflow: hidden; }
.tsearch-ico { width: 18px; height: 18px; margin-right: 11px; color: #222; stroke-width: 1.800; }
.tsearch-art { width: 74px; height: 40px; margin-left: auto; stroke: none; margin-right: 4px; }
.tsearch-art path { stroke-width: .5; }
.apps { display: flex; margin-left: 3px; }
.app { width: 49px; height: 40px; display: flex; align-items: center; justify-content: center; position: relative; }
.app svg { width: 24px; height: 24px; stroke: none; }
.running::after, .active::after { content: ""; position: absolute; left: 4px; right: 4px; bottom: 0; height: 2px; background: #76b9ed; }
.active { background: #46565a; }
.active::after { left: 0; right: 0; }
.chrome { position: relative; display: block; width: 24px; height: 24px; border-radius: 50%; background: radial-gradient(circle, #4285f4 0 27%, #fff 28% 41%, transparent 42%), conic-gradient(from -60deg, #ea4335 0 150deg, #fbbc04 150deg 270deg, #34a853 270deg 360deg); }
.ps { width: 22px; height: 22px; background: #001e36; border-radius: 4px; color: #31a8ff; font: 700 12px/22px "Open Sans", sans-serif; text-align: center; }
.badge { position: absolute; right: -3px; bottom: -3px; width: 15px; height: 15px; border-radius: 50%; font: 700 9px/15px "Open Sans", sans-serif; color: #fff; text-align: center; }
.badge-v { background: #b33a12; }
.badge-photo { background: radial-gradient(circle at 50% 35%, #1b2440 0 30%, #6d8bb0 32%); }
.badge-user { background: radial-gradient(circle at 50% 38%, #d25b2b 0 24%, transparent 26%), radial-gradient(ellipse at 50% 95%, #d25b2b 0 38%, transparent 40%), #f3d6c4; }
.tray { margin-left: auto; display: flex; align-items: center; font-size: 13.300px; color: #eee; padding-right: 22px; }
.sensex { width: 24px; height: 24px; margin-right: 9px; stroke: none; }
.sx-val { color: #e3505a; margin-left: 9px; margin-right: 25px; }
.tray-up { width: 16px; height: 16px; transform: scaleY(-1); margin-right: 8px; }
.tray-ico { width: 17px; height: 17px; margin-right: 11px; }
.eng { font-size: 12.500px; margin-left: 3px; margin-right: 6px; }
.clock { display: flex; flex-direction: column; align-items: center; gap: 3px; font-size: 12.500px; line-height: 16px; margin-right: 14px; }
.notif { position: relative; width: 22px; height: 24px; }
.notif svg { width: 18px; height: 18px; stroke: none; }
.notif em { position: absolute; right: -4px; bottom: -4px; width: 18px; height: 18px; border: 1.500px solid #aaa; border-radius: 50%; background: #222; font: 11px/15px "Open Sans", sans-serif; text-align: center; color: #eee; }

/* right: lecture slide */
.viewer { background: #000; padding-top: 112px; }
.slide { height: 751px; background: #fefefe; border-top: 1px solid #888; position: relative; padding: 52px 0 0 85px; }
.slide h1 { margin: 0; font-family: "DejaVu Serif", serif; font-weight: 400; font-size: 32.700px; line-height: 44px; height: 44px; color: #2b33c2; white-space: nowrap; filter: blur(.45px); -webkit-text-stroke: .8px #2b33c2; }
.points { list-style: none; margin: 29px 0 0 -85px; padding: 0; font-family: Roboto, sans-serif; color: #3a3a3a; filter: blur(.5px); }
.points li { display: flex; align-items: center; white-space: nowrap; height: 40px; }
.l1, .l2 { font-size: 22.200px; }
.l1 { padding-left: 86px; }
.l2 { padding-left: 155px; }
.l3 { padding-left: 224px; font-size: 20.300px; }
.m1 { margin-top: 1px; }
.n1 { margin-top: -1px; }
.n2 { margin-top: -2px; }
.n3 { margin-top: -3px; }
.dot { flex: none; width: 50px; height: 7px; display: block; background: radial-gradient(circle 3.500px at 3.500px 50%, #6a70e0 98%, transparent 100%); }
.dot-strong { background: radial-gradient(circle 3.500px at 3.500px 50%, #2a2ec0 98%, transparent 100%); }
.l3 .dot { width: 49px; }
.num { flex: none; width: 50px; font-style: normal; color: #7f85e4; font-size: 26px; font-weight: 300; }
.math { font-family: "Liberation Serif", serif; font-style: italic; font-weight: 700; margin-left: 3px; font-size: 21px; }
.math sup { font-size: 12px; line-height: 0; }
.watermark { position: absolute; right: 4px; bottom: 6px; font-family: Roboto, sans-serif; font-size: 16px; color: #d8d8d8; filter: blur(.4px); }
```
